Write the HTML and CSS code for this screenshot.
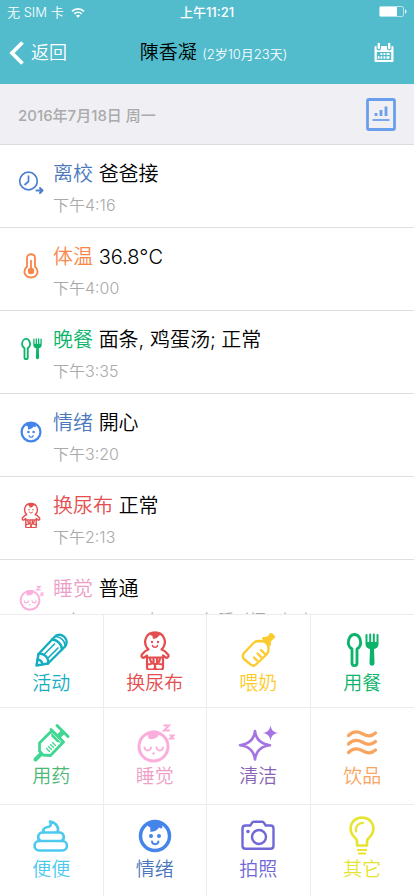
FILE: index.html
```html
<!DOCTYPE html>
<html lang="zh-CN">
<head>
    <meta charset="UTF-8">
    <meta name="viewport" content="width=device-width, initial-scale=1.0">
    <title>陳香凝</title>
    <link rel="stylesheet" href="styles.css">
</head>
<body>
    <!-- shared icons -->
    <svg class="sprite" aria-hidden="true">
        <symbol id="cutlery" viewBox="0 0 40 40">
            <path d="M12.500 4.500c-4 0-6.200 4.300-6.200 8.200 0 3 1.500 4.800 3.700 6.300v14c0 3.500 5 3.500 5 0V19c2.200-1.500 3.700-3.300 3.700-6.300 0-3.900-2.200-8.200-6.200-8.200z" fill="none" stroke="currentColor" stroke-width="2.800" stroke-linejoin="round"/>
            <path d="M23.500 5v9c0 3 2 4.500 4.500 5l-.5 14c0 3.500 5 3.500 5 0L32 19c2.500-.5 4.500-2 4.500-5V5c0-1.500-2-1.500-2 0v7h-1.700V4.500c0-1.500-2-1.500-2 0V12h-1.600V4.500c0-1.500-2-1.500-2 0V12h-1.700V5c0-1.500-2-1.500-2 0z" fill="currentColor"/>
        </symbol>
        <symbol id="face" viewBox="0 0 40 40">
            <circle cx="20" cy="20" r="14.500" fill="none" stroke="currentColor" stroke-width="3.500"/>
            <path d="M11 7.500c1 2 2.500 3.300 4.200 4l.3 4.500c4-.2 7-1.700 8.500-4.500 1.200.8 2.200 1 3.500.7-.5-1.300-.2-2.700.5-4-4-4.500-12-5-17-.7z" fill="currentColor"/>
            <circle cx="16" cy="20" r="2" fill="currentColor"/>
            <circle cx="24" cy="20" r="2" fill="currentColor"/>
            <path d="M17 25.500c.2 3.500 6.200 3.500 6.400 0" fill="none" stroke="currentColor" stroke-width="2" stroke-linecap="round"/>
        </symbol>
        <symbol id="baby" viewBox="0 0 40 40">
            <g fill="none" stroke="currentColor" stroke-width="2.200" stroke-linejoin="round" stroke-linecap="round">
                <path d="M13.500 19.500C10 16 9.500 11.500 11 8c3-7.500 15-7.500 18 0 1.500 3.500 1 8-2.500 11.500 3.500.8 5 3 6.500 5 1.500 2-.8 4.200-2.700 2.700L28 25.500v12c0 1.500-1 2-2 2h-4c-1.500 0-2-1-2-3 0 2-.5 3-2 3h-4c-1 0-2-.5-2-2v-12l-2.300 1.700C7.800 28.700 5.500 26.500 7 24.500c1.500-2 3-4.200 6.500-5z"/>
                <path d="M12 27.500h16M12 34.500l4-.5M28 34.500l-4-.5M15 28c.3 4 2 6 5 6s4.700-2 5-6M18.500 28v6M22 28v6M20 34v3"/>
                <path d="M17.500 15.500c.3 2.300 4.700 2.300 5 0" stroke-width="1.500"/>
            </g>
            <path d="M14 4c1.500 1 2.500 1.800 3.500 2 0 1 .2 2 .5 3 3-.3 5-1.500 6-3.500l2.500-.5C23.500 1.200 17 1 14 4z" fill="currentColor"/>
            <circle cx="17" cy="12" r="1.200" fill="currentColor"/>
            <circle cx="23" cy="12" r="1.200" fill="currentColor"/>
        </symbol>
        <symbol id="sleep" viewBox="0 0 40 40">
            <g fill="none" stroke="currentColor" stroke-linecap="round">
                <circle cx="18.500" cy="23.500" r="14.500" stroke-width="3"/>
                <path d="M9.500 24.500c.5 4 6 4 6.500 0M21.500 24.500c.5 4 6 4 6.500 0" stroke-width="1.900"/>
                <path d="M28.500 2.500h5.500l-5 5h6" stroke-width="2" stroke-linecap="butt"/>
                <path d="M34.500 12.500h4l-3.500 3h4.500" stroke-width="1.800" stroke-linecap="butt"/>
            </g>
            <path d="M13 9.500c-.3 2.500-.2 4.500 1 6.500 5 .8 10.500-1.500 10.500-7-3-2-8.500-1.700-11.500.5z" fill="currentColor"/>
            <circle cx="18.500" cy="30.500" r="1.200" fill="currentColor"/>
        </symbol>
    </svg>

    <div class="app">
        <header class="header">
            <div class="status-bar">
                <div class="carrier">
                    <span>无 SIM 卡</span>
                    <svg class="wifi" viewBox="0 0 14 11">
                        <path d="M1 4.300a8.500 8.500 0 0 1 12 0M3.300 6.800a5.200 5.200 0 0 1 7.400 0" fill="none" stroke="currentColor" stroke-width="1.700"/>
                        <path d="M5 8.700a2.900 2.900 0 0 1 4 0l-2 2.100z" fill="currentColor"/>
                    </svg>
                </div>
                <div class="clock">上午11:21</div>
                <svg class="battery" viewBox="0 0 28 12">
                    <rect x=".5" y=".5" width="24" height="10" rx="1.500" fill="none" stroke="currentColor" stroke-opacity=".6"/>
                    <rect x="1" y="1" width="17" height="9" fill="currentColor"/>
                    <path d="M26 3.500c2 .5 2 3.500 0 4z" fill="currentColor"/>
                </svg>
            </div>
            <nav class="nav-bar">
                <a class="back" href="#">
                    <svg viewBox="0 0 15 24"><path d="M13.500 1.500L3 12l10.500 10.500" fill="none" stroke="currentColor" stroke-width="3.800"/></svg>
                    <span>返回</span>
                </a>
                <h1 class="child-name">陳香凝 <small>(2岁10月23天)</small></h1>
                <button class="calendar" type="button" aria-label="日历">
                    <svg viewBox="0 0 20 20">
                        <path d="M2 3h.5v2.500c0 2.500 4.500 2.500 4.500 0V3h6v2.500c0 2.500 4.500 2.500 4.500 0V3h.5c1 0 1.500.5 1.500 1.500v13c0 1-.5 1.500-1.500 1.500H2c-1 0-1.500-.5-1.500-1.500v-13C.5 3.500 1 3 2 3zm.8 6v8h14.400V9z" fill="currentColor" fill-rule="evenodd"/>
                        <path d="M4.800 1v4M15.200 1v4" stroke="currentColor" stroke-width="2.400" stroke-linecap="round"/>
                        <path d="M6.500 10h1.800v2H6.500zM9.500 10h1.800v2H9.500zM12.500 10h3v2h-3zM3.800 13.200h1.700v2.500H3.800zM6.500 13.200h1.800v2.500H6.500zM9.500 13.200h1.800v2.500H9.500zM12.500 13.200h3v2.500h-3z" fill="currentColor"/>
                    </svg>
                </button>
            </nav>
        </header>

        <div class="date-bar">
            <span>2016年7月18日 周一</span>
            <button class="report" type="button" aria-label="报告">
                <svg viewBox="0 0 30 33">
                    <rect x="1.500" y="1.500" width="27" height="30" rx="1.500" fill="none" stroke="currentColor" stroke-width="2.800"/>
                    <path d="M10 15v3M15 12v6M20 8.500V18" stroke="currentColor" stroke-width="2.800"/>
                    <path d="M6.500 22h17" stroke="currentColor" stroke-width="1.800"/>
                </svg>
            </button>
        </div>

        <main class="timeline">
            <article class="entry">
                <svg class="entry-icon leave-icon" viewBox="0 0 26 26">
                    <g fill="none" stroke="currentColor" stroke-linecap="round" stroke-linejoin="round">
                        <circle cx="10.500" cy="11" r="8.800" stroke-width="1.700"/>
                        <path d="M10.500 6v5.500L7 14.500" stroke-width="1.700"/>
                        <path d="M18.500 20.500H24M22 18l2.500 2.500L22 23" stroke-width="2"/>
                    </g>
                </svg>
                <div>
                    <h2><span class="leave">离校</span> 爸爸接</h2>
                    <time>下午4:16</time>
                </div>
            </article>
            <article class="entry">
                <svg class="entry-icon temp" viewBox="0 0 26 26">
                    <path d="M9 13.500V5c0-5 8-5 8 0v8.500c5 4.500 2 11-4 11s-9-6.500-4-11z" fill="none" stroke="currentColor" stroke-width="1.800"/>
                    <path d="M13 7v11" stroke="currentColor" stroke-width="1.800"/>
                    <circle cx="13" cy="18" r="3.200" fill="currentColor"/>
                </svg>
                <div>
                    <h2><span class="temp">体温</span> 36.8°C</h2>
                    <time>下午4:00</time>
                </div>
            </article>
            <article class="entry">
                <svg class="entry-icon meal"><use href="#cutlery"/></svg>
                <div>
                    <h2><span class="meal">晚餐</span> 面条, 鸡蛋汤; 正常</h2>
                    <time>下午3:35</time>
                </div>
            </article>
            <article class="entry">
                <svg class="entry-icon mood-icon"><use href="#face"/></svg>
                <div>
                    <h2><span class="mood">情绪</span> 開心</h2>
                    <time>下午3:20</time>
                </div>
            </article>
            <article class="entry">
                <svg class="entry-icon diaper"><use href="#baby"/></svg>
                <div>
                    <h2><span class="diaper">换尿布</span> 正常</h2>
                    <time>下午2:13</time>
                </div>
            </article>
            <article class="entry">
                <svg class="entry-icon sleep-icon"><use href="#sleep"/></svg>
                <div>
                    <h2><span class="sleep">睡觉</span> 普通</h2>
                    <time>下午1:00 - 下午2:30 午睡时间 1小时</time>
                </div>
            </article>
        </main>

        <div class="actions">
            <button class="action activity" type="button">
                <svg viewBox="0 0 40 40">
                    <g fill="none" stroke="currentColor" stroke-width="2.400" stroke-linejoin="round" stroke-linecap="round">
                        <path d="M5.500 35.500L7.500 24 23 7.500c3-3.500 7.500-3.500 10.500-.5s3 7.500-.5 10.500L17 33.500z"/>
                        <path d="M7.500 24c5-1.500 11 4 9.500 9.500M6.500 29.500c2.500 0 5 2.500 5 4.500M21 9.500c5 0 10 5 10 10"/>
                        <path d="M23.500 14L13.500 24M27 18L17.500 27.500" stroke-width="1.700"/>
                        <path d="M25 6.500c5 1 8.500 4.500 9 8.500" stroke-width="1.700"/>
                    </g>
                </svg>
                <span>活动</span>
            </button>
            <button class="action diaper" type="button">
                <svg><use href="#baby"/></svg>
                <span>换尿布</span>
            </button>
            <button class="action milk" type="button">
                <svg viewBox="0 0 40 40">
                    <path d="M6 23l9.500-10c1.500-1.500 3-2 5-2l4 .2c3 .5 5.500 3 6 6 .2 3-.2 5.500-2 7.300L18.500 34c-2 2-4.500 2-6.500 0l-6-5c-1.500-1.500-1.500-4 0-6z" fill="none" stroke="currentColor" stroke-width="2.400"/>
                    <path d="M16 27.500l3 3M19.500 23.500l3.500 3.500M23 20l4 4" stroke="currentColor" stroke-width="2.400" stroke-linecap="round"/>
                    <path d="M24.500 9.500c-1-1-.5-2.500 1-2.500 3.500.5 4.500-1 5.500-2.500.7-1.500 2.500-2 3.500-1l2 2c1 1 .5 2.800-1 3.500-1.500 1-3 2-2.500 5.500 0 1.500-1.500 2-2.500 1z" fill="currentColor"/>
                </svg>
                <span>喂奶</span>
            </button>
            <button class="action meal" type="button">
                <svg><use href="#cutlery"/></svg>
                <span>用餐</span>
            </button>

            <button class="action medicine" type="button">
                <svg viewBox="0 0 40 40">
                    <g fill="none" stroke="currentColor" stroke-linecap="round">
                        <path d="M4.500 36.500l5-5" stroke-width="4"/>
                        <path d="M20 8.500L8.500 20v8l3.500 4 7.500.5L31.500 20" stroke-width="2.800" stroke-linejoin="round"/>
                        <path d="M20 6.500L32.500 19M26 2.500L37 13.500" stroke-width="3"/>
                        <path d="M27 14l5-5" stroke-width="5" stroke-linecap="butt"/>
                        <path d="M15.500 25.500l3 3M17.500 23.500l3 3M19.500 21.500l3 3M21.500 19.500l3 3" stroke-width="1.300"/>
                    </g>
                    <path d="M20 9l10.500 11L26 19l-5.500-5.500z" fill="currentColor"/>
                </svg>
                <span>用药</span>
            </button>
            <button class="action sleep-icon" type="button">
                <svg><use href="#sleep"/></svg>
                <span class="sleep">睡觉</span>
            </button>
            <button class="action clean-icon" type="button">
                <svg viewBox="0 0 40 40">
                    <path d="M17 8c-1 8.500-6 13.200-15 14.200 9 1 14 6 15 14.300 1-8.300 6-13.300 15-14.300-9-1-14-5.700-15-14.200z" fill="none" stroke="currentColor" stroke-width="2.600" stroke-linejoin="round"/>
                    <path d="M32.500 2c.5 5 3 7.500 8 8-5 .5-7.500 3-8 8-.5-5-3-7.500-8-8 5-.5 7.500-3 8-8z" fill="currentColor"/>
                </svg>
                <span class="clean">清洁</span>
            </button>
            <button class="action drink" type="button">
                <svg viewBox="0 0 40 40">
                    <path d="M6.500 12.500c4-4 8-5 13.500-2s9 3.500 13.500-.5M6.500 21c4-4 8-5 13.500-2s9 3.500 13.500-.5M6.500 29.500c4-4 8-5 13.500-2s9 3.500 13.500-.5" fill="none" stroke="currentColor" stroke-width="3.200" stroke-linecap="round"/>
                </svg>
                <span>饮品</span>
            </button>

            <button class="action poop" type="button">
                <svg viewBox="0 0 40 40">
                    <g fill="none" stroke="currentColor" stroke-width="2.600" stroke-linejoin="round">
                        <rect x="3.500" y="25" width="32.500" height="9.500" rx="4.700"/>
                        <path d="M9.500 25c-4-2-2.500-8.500 2-8.500h17c4.500 0 6 6.500 2 8.500"/>
                        <path d="M13.500 16.500c-3-2.500 0-5 3-5.500 3.500-.5 4-2.500 2.500-5.500 6 1 9.500 6 7.500 11"/>
                    </g>
                </svg>
                <span>便便</span>
            </button>
            <button class="action mood-icon" type="button">
                <svg><use href="#face"/></svg>
                <span class="mood">情绪</span>
            </button>
            <button class="action photo" type="button">
                <svg viewBox="0 0 40 40">
                    <g fill="none" stroke="currentColor" stroke-width="2.400" stroke-linejoin="round">
                        <path d="M7.500 9.500h4.800l1.700-2.700c.4-.8 1-1 1.800-1h8.400c.8 0 1.400.2 1.800 1l1.700 2.700h4.800c1.800 0 3 1.200 3 3v17.200c0 1.800-1.200 3-3 3h-25c-1.800 0-3-1.200-3-3V12.500c0-1.800 1.200-3 3-3z"/>
                        <circle cx="21" cy="21" r="7"/>
                    </g>
                    <circle cx="10" cy="15.500" r="1.800" fill="currentColor"/>
                </svg>
                <span>拍照</span>
            </button>
            <button class="action other" type="button">
                <svg viewBox="0 0 40 40">
                    <g fill="none" stroke="currentColor" stroke-width="2.600" stroke-linejoin="round">
                        <path d="M15 29.500v-4c0-2-1-3-2.500-4.200C9 18 7.300 12.500 9.500 8 13.500-.5 26.500-.5 30.500 8c2.200 4.500.5 10-3 13.300-1.500 1.200-2.500 2.200-2.500 4.200v4z"/>
                        <path d="M14 15.500c-1-5 2.500-8.500 7-8.700" stroke-width="2.200" stroke-linecap="round"/>
                        <path d="M15 34h10M16 37.500h8" stroke-width="2.200"/>
                    </g>
                </svg>
                <span>其它</span>
            </button>
        </div>
    </div>
</body>
</html>
```

FILE: styles.css
```css
* {
    margin: 0;
    padding: 0;
    box-sizing: border-box;
}

body {
    background-color: #fff;
    color: #000;
    font-family: Inter, "Noto Sans CJK SC", sans-serif;
    font-weight: 350;
}

button {
    background: none;
    border: none;
    font: inherit;
    cursor: pointer;
}

svg {
    display: block;
    overflow: visible;
}

.sprite {
    display: none;
}

.app {
    display: flex;
    flex-direction: column;
    height: 100vh;
}

/* Header */
.header {
    flex: none;
    background-color: #52bccd;
    color: #fff;
}

.status-bar {
    display: grid;
    grid-template-columns: 1fr auto 1fr;
    align-items: center;
    height: 24px;
    padding: 0 7px;
    font-size: 13px;
    line-height: 24px;
}

.carrier {
    display: flex;
    align-items: center;
    gap: 7px;
}

.wifi {
    width: 14px;
    height: 11px;
}

.clock {
    font-weight: 500;
}

.battery {
    width: 28px;
    height: 12px;
    justify-self: end;
}

.nav-bar {
    display: grid;
    grid-template-columns: 1fr auto 1fr;
    align-items: center;
    height: 60px;
    padding: 0 20px 2px 9px;
}

.back {
    display: flex;
    align-items: center;
    gap: 7px;
    color: #fff;
    font-size: 18px;
    line-height: 24px;
    text-decoration: none;
}

.back svg {
    width: 15px;
    height: 24px;
}

.child-name {
    padding-left: 24px;
    color: #000;
    font-size: 19px;
    font-weight: 350;
    line-height: 24px;
}

.child-name small {
    color: #fff;
    font-size: 13px;
}

.calendar {
    justify-self: end;
    color: #fff;
}

.calendar svg {
    width: 20px;
    height: 20px;
}

.date-bar {
    flex: none;
    display: flex;
    align-items: center;
    justify-content: space-between;
    height: 61px;
    padding: 0 18px;
    background-color: #efeff4;
    border-bottom: 1px solid #dcdce0;
    color: #aaa;
    font-size: 15px;
    font-weight: 500;
}

.report {
    color: #6a9fec;
}

.report svg {
    width: 30px;
    height: 33px;
}

/* Timeline */
.timeline {
    flex: 1;
    min-height: 0;
    overflow: hidden;
}

.entry {
    display: flex;
    align-items: flex-start;
    gap: 9px;
    height: 83px;
    padding: 13px 18px 0;
    border-bottom: 1px solid #dfdfdf;
}

.entry-icon {
    flex: none;
    width: 26px;
    height: 26px;
    margin-top: 12px;
}

.entry h2 {
    font-size: 20px;
    font-weight: 350;
    line-height: 32px;
}

.entry time {
    display: block;
    color: #aaa;
    font-size: 16px;
    line-height: 30px;
}

/* Action grid */
.actions {
    flex: none;
    display: grid;
    grid-template-columns: repeat(4, 1fr);
    grid-template-rows: 93px 97px 92px;
    background-color: #fff;
}

.action {
    display: flex;
    flex-direction: column;
    align-items: center;
    gap: 1px;
    padding-top: 15px;
    border-top: 1px solid #ebebf0;
    border-right: 1px solid #ebebf0;
    font-size: 19px;
    line-height: 26px;
}

.action:nth-child(4n) {
    border-right: none;
}

.action:nth-child(n+9) {
    padding-top: 11px;
}

.action svg {
    width: 40px;
    height: 40px;
}

/* Colors */
.leave-icon { color: #4b7fcf; }
.leave { color: #4b78bd; }
.temp { color: #f98548; }
.meal { color: #0bb36b; }
.mood-icon { color: #4585ea; }
.mood { color: #4b78bd; }
.diaper { color: #e44e50; }
.sleep-icon { color: #fbaedb; }
.sleep { color: #ee9fc8; }
.activity { color: #16adc0; }
.milk { color: #fccb2d; }
.medicine { color: #40d792; }
.medicine span { color: #4cb878; }
.clean-icon { color: #a374e2; }
.clean { color: #8865b4; }
.drink { color: #f9a45f; }
.poop { color: #4bc9ef; }
.photo { color: #7168d8; }
.other { color: #e6e42f; }
```
